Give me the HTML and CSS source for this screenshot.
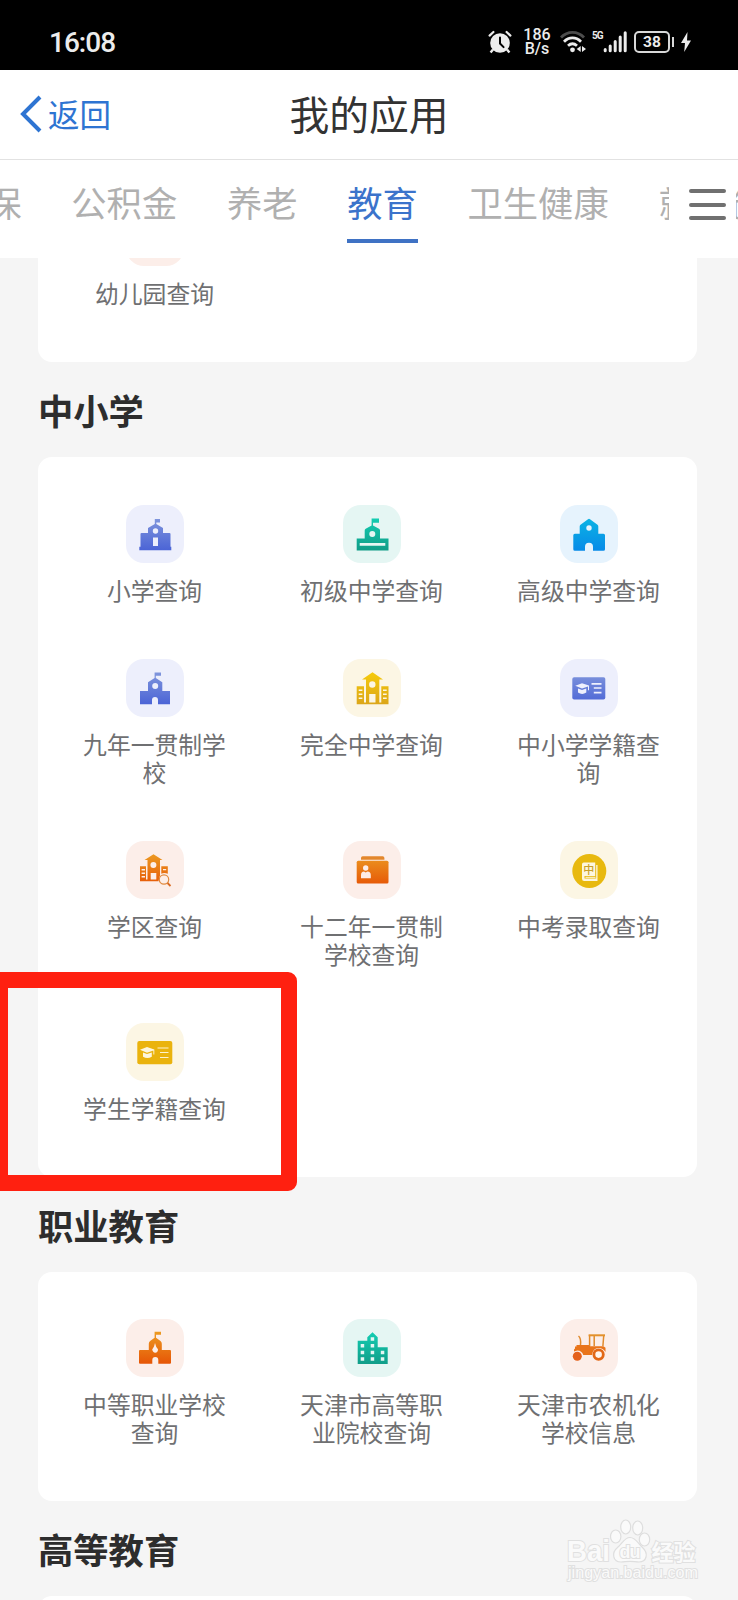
FILE: index.html
```html
<!DOCTYPE html>
<html lang="zh-CN">
  <head>
    <meta charset="utf-8" />
    <title>我的应用</title>
    <link rel="stylesheet" href="styles.css">
  </head>

  <body>
    <!-- shared gradients for the app icons -->
    <svg class="defs" width="0" height="0">
      <defs>
        <linearGradient id="blue" gradientUnits="userSpaceOnUse" x1="0" y1="13" x2="0" y2="46">
          <stop offset="0" stop-color="#8096dc" /><stop offset="1" stop-color="#4a63d6" />
        </linearGradient>
        <linearGradient id="green" gradientUnits="userSpaceOnUse" x1="0" y1="13" x2="0" y2="46">
          <stop offset="0" stop-color="#14cdb2" /><stop offset="1" stop-color="#109c87" />
        </linearGradient>
        <linearGradient id="sky" gradientUnits="userSpaceOnUse" x1="0" y1="13" x2="0" y2="46">
          <stop offset="0" stop-color="#0cb4e4" /><stop offset="1" stop-color="#078ae8" />
        </linearGradient>
        <linearGradient id="yellow" gradientUnits="userSpaceOnUse" x1="0" y1="13" x2="0" y2="46">
          <stop offset="0" stop-color="#f6cb0a" /><stop offset="1" stop-color="#dba51a" />
        </linearGradient>
        <linearGradient id="orange" gradientUnits="userSpaceOnUse" x1="0" y1="13" x2="0" y2="46">
          <stop offset="0" stop-color="#ec9a22" /><stop offset="1" stop-color="#e65305" />
        </linearGradient>
      </defs>
    </svg>

    <div class="statusbar">
      <span class="time">16:08</span>
      <div class="status-icons">
        <svg class="alarm" width="24" height="24" viewBox="0 0 24 24">
          <circle cx="12" cy="13" r="9.8" fill="#ececec" />
          <path d="M1.6 5.6 5.4 2M22.4 5.6 18.6 2" stroke="#ececec" stroke-width="2.2" stroke-linecap="round" />
          <path d="M5 19.500 2.600 22.500M19 19.500l2.400 3" stroke="#ececec" stroke-width="2.400" />
          <path d="M12 7.500v6l3.600 3.600" fill="none" stroke="#000" stroke-width="2" stroke-linecap="round" />
        </svg>
        <div class="speed"><span>186</span><span>B/s</span></div>
        <svg class="wifi" width="26" height="22" viewBox="0 0 26 22">
          <path d="M1 6.500C7.500-.3 17.500-.3 24 6.500" fill="none" stroke="#4c4c4c" stroke-width="2.800" />
          <path d="M4 10.700c5-5 12-5 17 0M8 14.800c3-2.700 6-2.700 9 0" fill="none" stroke="#ececec" stroke-width="2.800" />
          <circle cx="12.500" cy="18.800" r="2.400" fill="#ececec" />
          <path d="M20.700 15v6l-4-3zM22 15v6l4-3z" fill="#ececec" />
        </svg>
        <span class="network">5G</span>
        <svg class="signal" width="24" height="22" viewBox="0 0 24 22">
          <path d="M2.200 18.500v1.200M7.200 15v4.700M12.200 10.500v9.200M17.200 6v13.700M22.200 1.800v17.900" stroke="#ececec" stroke-width="3" stroke-linecap="round" />
        </svg>
        <span class="battery">38</span>
        <span class="nub"></span>
        <svg class="bolt" width="10" height="20" viewBox="0 0 10 20"><path d="M6.500 0 0 11h4L3.200 20 10 8.500H6z" fill="#ececec" /></svg>
      </div>
    </div>

    <div class="header">
      <a class="back">
        <svg width="24" height="38" viewBox="0 0 24 38"><path d="M22 2 5 19l17 17" fill="none" stroke="#2e74d2" stroke-width="4" /></svg>
        <span>返回</span>
      </a>
      <h1>我的应用</h1>
    </div>

    <div class="tabs">
      <div class="tab-list">
        <span class="tab">社保</span>
        <span class="tab">公积金</span>
        <span class="tab">养老</span>
        <span class="tab active">教育</span>
        <span class="tab">卫生健康</span>
        <span class="tab">就业创业</span>
      </div>
      <div class="menu"><i></i><i></i><i></i></div>
    </div>

    <div class="content">
      <div class="card card-first">
        <div class="app">
          <div class="icon orange"></div>
          <p>幼儿园查询</p>
        </div>
      </div>

      <h2>中小学</h2>
      <div class="card">
        <div class="app">
          <div class="icon blue">
            <svg viewBox="0 0 58 58">
              <path fill="url(#blue)" fill-rule="evenodd" d="M28.800 14H34v3.500h-3.700V19l6.700 4v5h6.500a1 1 0 0 1 1 1v12.800h.8v3.500H13.300v-3.500h1.200V29a1 1 0 0 1 1-1H22v-5l6.800-4zM29.500 23.300a2.700 2.700 0 1 0 0 5.400 2.700 2.700 0 0 0 0-5.400M27 32.500V41h5v-8.500z" />
            </svg>
          </div>
          <p>小学查询</p>
        </div>
        <div class="app">
          <div class="icon green">
            <svg viewBox="0 0 58 58">
              <path fill="url(#green)" fill-rule="evenodd" d="M28.600 13.500H36v4.200h-6v2.800l6 3.200a2 2 0 0 1 1 1.800v8h8.500v12H13.700v-12h8v-8a2 2 0 0 1 1-1.800l5.900-3.200zM29.300 26a3 3 0 1 0 0 6 3 3 0 0 0 0-6M16.700 38v2.800h25.600V38z" />
            </svg>
          </div>
          <p>初级中学查询</p>
        </div>
        <div class="app">
          <div class="icon sky">
            <svg viewBox="0 0 58 58">
              <path fill="url(#sky)" fill-rule="evenodd" d="M28 14.200q1-.8 2 0l7.500 5.600q.8.600.8 1.600v7.300h5.200q1.500 0 1.500 1.500v14q0 1.500-1.500 1.500H33v-4a4 4 0 0 0-8 0v4H14.800q-1.500 0-1.500-1.500v-14q0-1.500 1.500-1.500h4.900v-7.300q0-1 .8-1.600zM29 20.300a2.700 2.700 0 1 0 0 5.400 2.700 2.700 0 0 0 0-5.400" />
            </svg>
          </div>
          <p>高级中学查询</p>
        </div>
        <div class="app">
          <div class="icon blue">
            <svg viewBox="0 0 58 58">
              <path fill="url(#blue)" fill-rule="evenodd" d="M28.600 13.500H35v3.200h-5.200V19l6.500 4.300V32H44v13.200H32V41a3 3 0 0 0-6 0v4.200H14V32h8v-8.700l6.600-4.300zM29.200 24a3 3 0 1 0 0 6 3 3 0 0 0 0-6" />
            </svg>
          </div>
          <p>九年一贯制学校</p>
        </div>
        <div class="app">
          <div class="icon yellow">
            <svg viewBox="0 0 58 58">
              <path fill="url(#yellow)" fill-rule="evenodd" d="M29.500 13.300 40 20.500H36.300v23H38.300V27.300h7.200v18H13.700v-18H21v16.200h2v-23H19zM29.300 22.300a3.200 3.200 0 1 0 0 6.400 3.200 3.200 0 0 0 0-6.400M26.200 35v8.500h6.300V35zM15.700 30.500V32h3.700v-1.500zM15.700 34.500V36h3.700v-1.500zM15.700 38.500V40h3.700v-1.500zM40 30.500V32h3.700v-1.500zM40 34.500V36h3.700v-1.500zM40 38.500V40h3.700v-1.500z" />
            </svg>
          </div>
          <p>完全中学查询</p>
        </div>
        <div class="app">
          <div class="icon blue">
            <svg viewBox="0 0 58 58">
              <rect x="12.300" y="18.200" width="33" height="22.300" rx="1.800" fill="url(#blue)" />
              <path fill="#eef0fd" d="m15.300 26.800 6.700-2.500 7 2.300v4.600h-1v-3.800l-6 2zM18 29.600l4 1.300 4.300-1.300v4q-4.200 2.800-8.300 0z" />
              <path stroke="#eef0fd" stroke-width="1.700" d="M31.500 24.800h10M33.800 29h7.700M33.800 33.700h7.700" />
            </svg>
          </div>
          <p>中小学学籍查询</p>
        </div>
        <div class="app">
          <div class="icon orange">
            <svg viewBox="0 0 58 58">
              <path fill="url(#orange)" fill-rule="evenodd" d="M27.500 13.200 36.500 19H34v15.500L32.500 40.300H14v-15h6v13.200h1.500V19H18.500zM27.400 21a3 3 0 1 0 0 6 3 3 0 0 0 0-6M24.700 32v6.500h5.600V32zM15.600 28v1.400H19V28zM15.600 31.500v1.400H19v-1.400zM15.600 35v1.400H19V35zM35.300 25.300h6.500v7.500q-3.500-1.500-6.500 0zM37 28v1.300h3.200V28z" />
              <circle cx="38" cy="38.500" r="4.700" fill="#fdeee8" stroke="#e18a3e" stroke-width="1.200" />
              <path d="m41.500 42 3 3" stroke="#d96a22" stroke-width="1.800" />
            </svg>
          </div>
          <p>学区查询</p>
        </div>
        <div class="app">
          <div class="icon orange">
            <svg viewBox="0 0 58 58">
              <path fill="#e3872c" d="M18 18.700V17q0-1.700 1.700-1.700h20q1.700 0 1.700 1.700v1.700z" />
              <rect x="13.700" y="19.700" width="31.800" height="22.700" rx="1.500" fill="url(#orange)" />
              <circle cx="22.700" cy="27" r="2.700" fill="#fdece6" />
              <path fill="#fdece6" d="M18 37.300V34q0-3 3-3.400l1.700.9 1.700-.9q3.400.4 3.400 3.400v3.300z" />
            </svg>
          </div>
          <p>十二年一贯制学校查询</p>
        </div>
        <div class="app">
          <div class="icon yellow">
            <svg viewBox="0 0 58 58">
              <circle cx="29.300" cy="30" r="17" fill="#e8b90f" />
              <path fill="#fdf6df" d="M22 23.300q0-1.800 1.800-1.800h11.400V35H24.500v2.500h11.700V24h1.300v16H24.200q-2.200 0-2.200-2.200z" />
              <path stroke="#fdf6df" d="M25.500 36.300h10" />
              <text class="book-text" x="28.800" y="32.800">中</text>
            </svg>
          </div>
          <p>中考录取查询</p>
        </div>
        <div class="app">
          <div class="icon yellow">
            <svg viewBox="0 0 58 58">
              <rect x="11.300" y="18" width="35" height="23.300" rx="2" fill="#eab30e" />
              <path fill="#fdf6df" d="m14 26.700 7-2.600 7.300 2.400v5h-.9v-4L21 29.700zM17 29.600l4 1.500 4.800-1.500v4.200q-4.400 2.600-8.800 0z" />
              <path stroke="#fdf3cf" stroke-width="1.100" d="M31.500 25h11M34 29.500h8.500M34 34.500h8.500" />
            </svg>
          </div>
          <p>学生学籍查询</p>
        </div>
      </div>

      <h2>职业教育</h2>
      <div class="card">
        <div class="app">
          <div class="icon orange">
            <svg viewBox="0 0 58 58">
              <path fill="url(#orange)" fill-rule="evenodd" d="M28.600 12.800H35v3h-5v3L34.500 22q1.300 1.200 1.300 2.800V31H44a1 1 0 0 1 1 1v11.700a1 1 0 0 1-1 1H32.300V41a3 3 0 0 0-6 0v3.700H14a1 1 0 0 1-1-1V32a1 1 0 0 1 1-1h8.800v-6.200q0-1.600 1.300-2.800l4.500-3.200zM29 24l-1 3.500-1.800 3q.5 3 3 3.200 2.800-.2 2.800-3.500L30.300 28z" />
            </svg>
          </div>
          <p>中等职业学校查询</p>
        </div>
        <div class="app">
          <div class="icon green">
            <svg viewBox="0 0 58 58">
              <path fill="url(#green)" fill-rule="evenodd" d="m29.500 13.300 5.200 5v10h10V45h-30V21.700h9.600v-3.400zM27.700 18.300v3.400h3.500v-3.400zM17.700 25v3.500h3.500V25zM27.700 25v3.500h3.500V25zM17.700 31.700v3.500h3.500v-3.500zM27.700 31.700v3.500h3.500v-3.500zM37.800 31.700v3.500h3.500v-3.500zM17.700 38.300v3.500h3.500v-3.500zM27.700 38.300v3.500h3.500v-3.500zM37.800 38.300v3.500h3.500v-3.500z" />
            </svg>
          </div>
          <p>天津市高等职业院校查询</p>
        </div>
        <div class="app">
          <div class="icon orange">
            <svg viewBox="0 0 58 58">
              <path fill="#e9741a" d="M15 29.500v-2h1.500V26h13l.7 1.300h13.300l2 1.500v4.200q-2.500-4-6.900-4-5.600.2-6.600 7h-8.700q-1.500-4.600-6-4.600l-3.300 1.200v-2z" />
              <path fill="none" stroke="#e08a2c" stroke-width="1.500" d="M18.500 17q2.700 2 2 9M29.600 16v11M34.200 17v10M43.700 17l-.8 10" />
              <path stroke="#e3912c" stroke-width="2" d="M28.600 16.300H45" />
              <circle cx="17.300" cy="37.300" r="4.500" fill="#e4601a" />
              <circle cx="38.600" cy="35.600" r="4.700" fill="#fff5ee" stroke="#e26817" stroke-width="2.800" />
            </svg>
          </div>
          <p>天津市农机化学校信息</p>
        </div>
      </div>

      <h2>高等教育</h2>
      <div class="card card-last"></div>
    </div>

    <div class="highlight"></div>

    <div class="watermark">
      <svg width="140" height="68" viewBox="0 0 140 68">
        <g fill="#fafafa" stroke="#dedede" stroke-width="1.200">
          <ellipse cx="55.700" cy="19.500" rx="5.200" ry="6.500" />
          <ellipse cx="65.700" cy="10" rx="5" ry="7" />
          <ellipse cx="77.700" cy="11" rx="5" ry="7" />
          <ellipse cx="84.500" cy="22.500" rx="5.200" ry="6.500" />
          <path d="M70 20.500c6 0 8 6 12.500 10 6.500 6 4 14.500-3.500 14.500-3.500 0-5-.7-9-.7s-5.500.7-9 .7c-8 0-10-9-3.500-14.500C62.500 26.500 64 20.500 70 20.500z" />
        </g>
        <text class="wm-brand" x="7" y="43.500" textLength="43" lengthAdjust="spacingAndGlyphs">Bai</text>
        <text class="wm-du" x="59.500" y="41" textLength="21">du</text>
        <text class="wm-cn" x="91.500" y="43">经验</text>
        <text class="wm-url" x="8" y="60.500" textLength="130" lengthAdjust="spacingAndGlyphs">jingyan.baidu.com</text>
      </svg>
    </div>
  </body>
</html>
```
FILE: styles.css
```css
* {
  box-sizing: border-box;
}

body {
  margin: 0;
  width: 738px;
  height: 1600px;
  overflow: hidden;
  position: relative;
  background-color: #f5f5f5;
  color: #333;
  font-family: "Noto Sans CJK SC", sans-serif;
}

h1, h2, p {
  margin: 0;
}

.defs {
  position: absolute;
}

/* status bar */
.statusbar {
  height: 70px;
  padding: 14px 47px 0 49px;
  display: flex;
  justify-content: space-between;
  align-items: center;
  background-color: #000;
  color: #ececec;
  font-family: Roboto, sans-serif;
}

.time {
  font-size: 28px;
  font-weight: 500;
  letter-spacing: -1px;
}

.status-icons {
  display: flex;
  align-items: center;
}

.speed {
  width: 26px;
  margin: 0 10px 0 12px;
  display: flex;
  flex-direction: column;
  align-items: center;
  font-size: 16px;
  line-height: 14.5px;
  font-weight: 500;
}

.network {
  width: 10px;
  margin: -12px 1px 0 6px;
  font-size: 10px;
  line-height: 12px;
  font-weight: 700;
  letter-spacing: -1px;
}

.battery {
  width: 36px;
  height: 22px;
  margin-left: 7px;
  border: 2px solid #d8d8d8;
  border-radius: 5px;
  font-size: 15.5px;
  line-height: 19px;
  font-weight: 700;
  text-align: center;
}

.nub {
  width: 2px;
  height: 10px;
  margin: 0 7px 0 2px;
  background-color: #d8d8d8;
}

/* header */
.header {
  height: 90px;
  position: relative;
  display: flex;
  align-items: center;
  justify-content: center;
  background-color: #fff;
  border-bottom: 1px solid #e2e2e2;
}

.header h1 {
  padding: 0 0 3px;
  font-size: 39.8px;
  font-weight: 400;
  line-height: 50px;
}

.back {
  position: absolute;
  left: 18px;
  top: 22px;
  height: 44px;
  display: flex;
  align-items: center;
  gap: 6px;
  color: #2e74d2;
  font-size: 31.5px;
  line-height: 44px;
}

.back span {
  padding-bottom: 3px;
}

/* category tabs */
.tabs {
  height: 98px;
  display: flex;
  position: relative;
  overflow: hidden;
  background-color: #fff;
}

.tab-list {
  display: flex;
  gap: 49.7px;
  margin-left: -49px;
}

.tab {
  height: 83px;
  padding-top: 17px;
  flex: none;
  font-size: 35.3px;
  line-height: 50px;
  color: #b0b0b0;
}

.tab.active {
  color: #3b73cb;
  border-bottom: 4px solid #3f72c4;
}

.menu {
  position: absolute;
  left: 669px;
  top: 0;
  width: 67px;
  height: 98px;
  padding: 29px 10px 0 20px;
  display: flex;
  flex-direction: column;
  gap: 9.5px;
  background-color: #fff;
}

.menu i {
  height: 4px;
  border-radius: 2px;
  background-color: #707070;
}

/* app sections */
.content {
  height: 1342px;
  padding: 0 41px 0 38px;
  overflow: hidden;
}

.card {
  padding: 47.5px 0 0 8px;
  display: grid;
  grid-template-columns: repeat(3, 217px);
  background-color: #fff;
  border-radius: 14px;
}

.card-first {
  height: 104px;
  padding-top: 0;
  align-content: end;
  border-radius: 0 0 14px 14px;
  overflow: hidden;
}

.card-last {
  height: 60px;
}

h2 {
  height: 95px;
  padding-top: 23px;
  font-size: 35.3px;
  font-weight: 700;
  line-height: 50px;
  color: #2d2d2d;
}

.app {
  padding-bottom: 55px;
  display: flex;
  flex-direction: column;
  align-items: center;
}

.app p {
  width: 146px;
  margin-top: 13px;
  font-size: 23.8px;
  line-height: 28px;
  text-align: center;
  color: #6f7072;
}

.icon {
  width: 58px;
  height: 58px;
  border-radius: 18px;
}

.icon svg {
  display: block;
  width: 58px;
  height: 58px;
}

.icon.blue { background-color: #edeffc; }
.icon.green { background-color: #e5f6f3; }
.icon.sky { background-color: #e6f3fd; }
.icon.yellow { background-color: #fcf6e4; }
.icon.orange { background-color: #fceee9; }

.book-text {
  font-size: 11px;
  font-weight: 500;
  text-anchor: middle;
  fill: #c9a02a;
}

/* red frame around the student record entry */
.highlight {
  position: absolute;
  left: -8px;
  top: 972px;
  width: 304.5px;
  height: 219px;
  border: 16px solid #ff2010;
  border-radius: 9px;
}

.watermark {
  position: absolute;
  left: 560px;
  top: 1517px;
}

.watermark svg {
  display: block;
}

.watermark text {
  fill: #fafafa;
  stroke: #e0e0e0;
  stroke-width: 2px;
  paint-order: stroke;
}

.wm-brand {
  font: 700 30px "Liberation Sans", sans-serif;
}

.wm-du {
  font: 700 18px "Liberation Sans", sans-serif;
}

.wm-cn {
  font-size: 22px;
  font-weight: 700;
}

.wm-url {
  font: 400 16px "Liberation Sans", sans-serif;
}
```
